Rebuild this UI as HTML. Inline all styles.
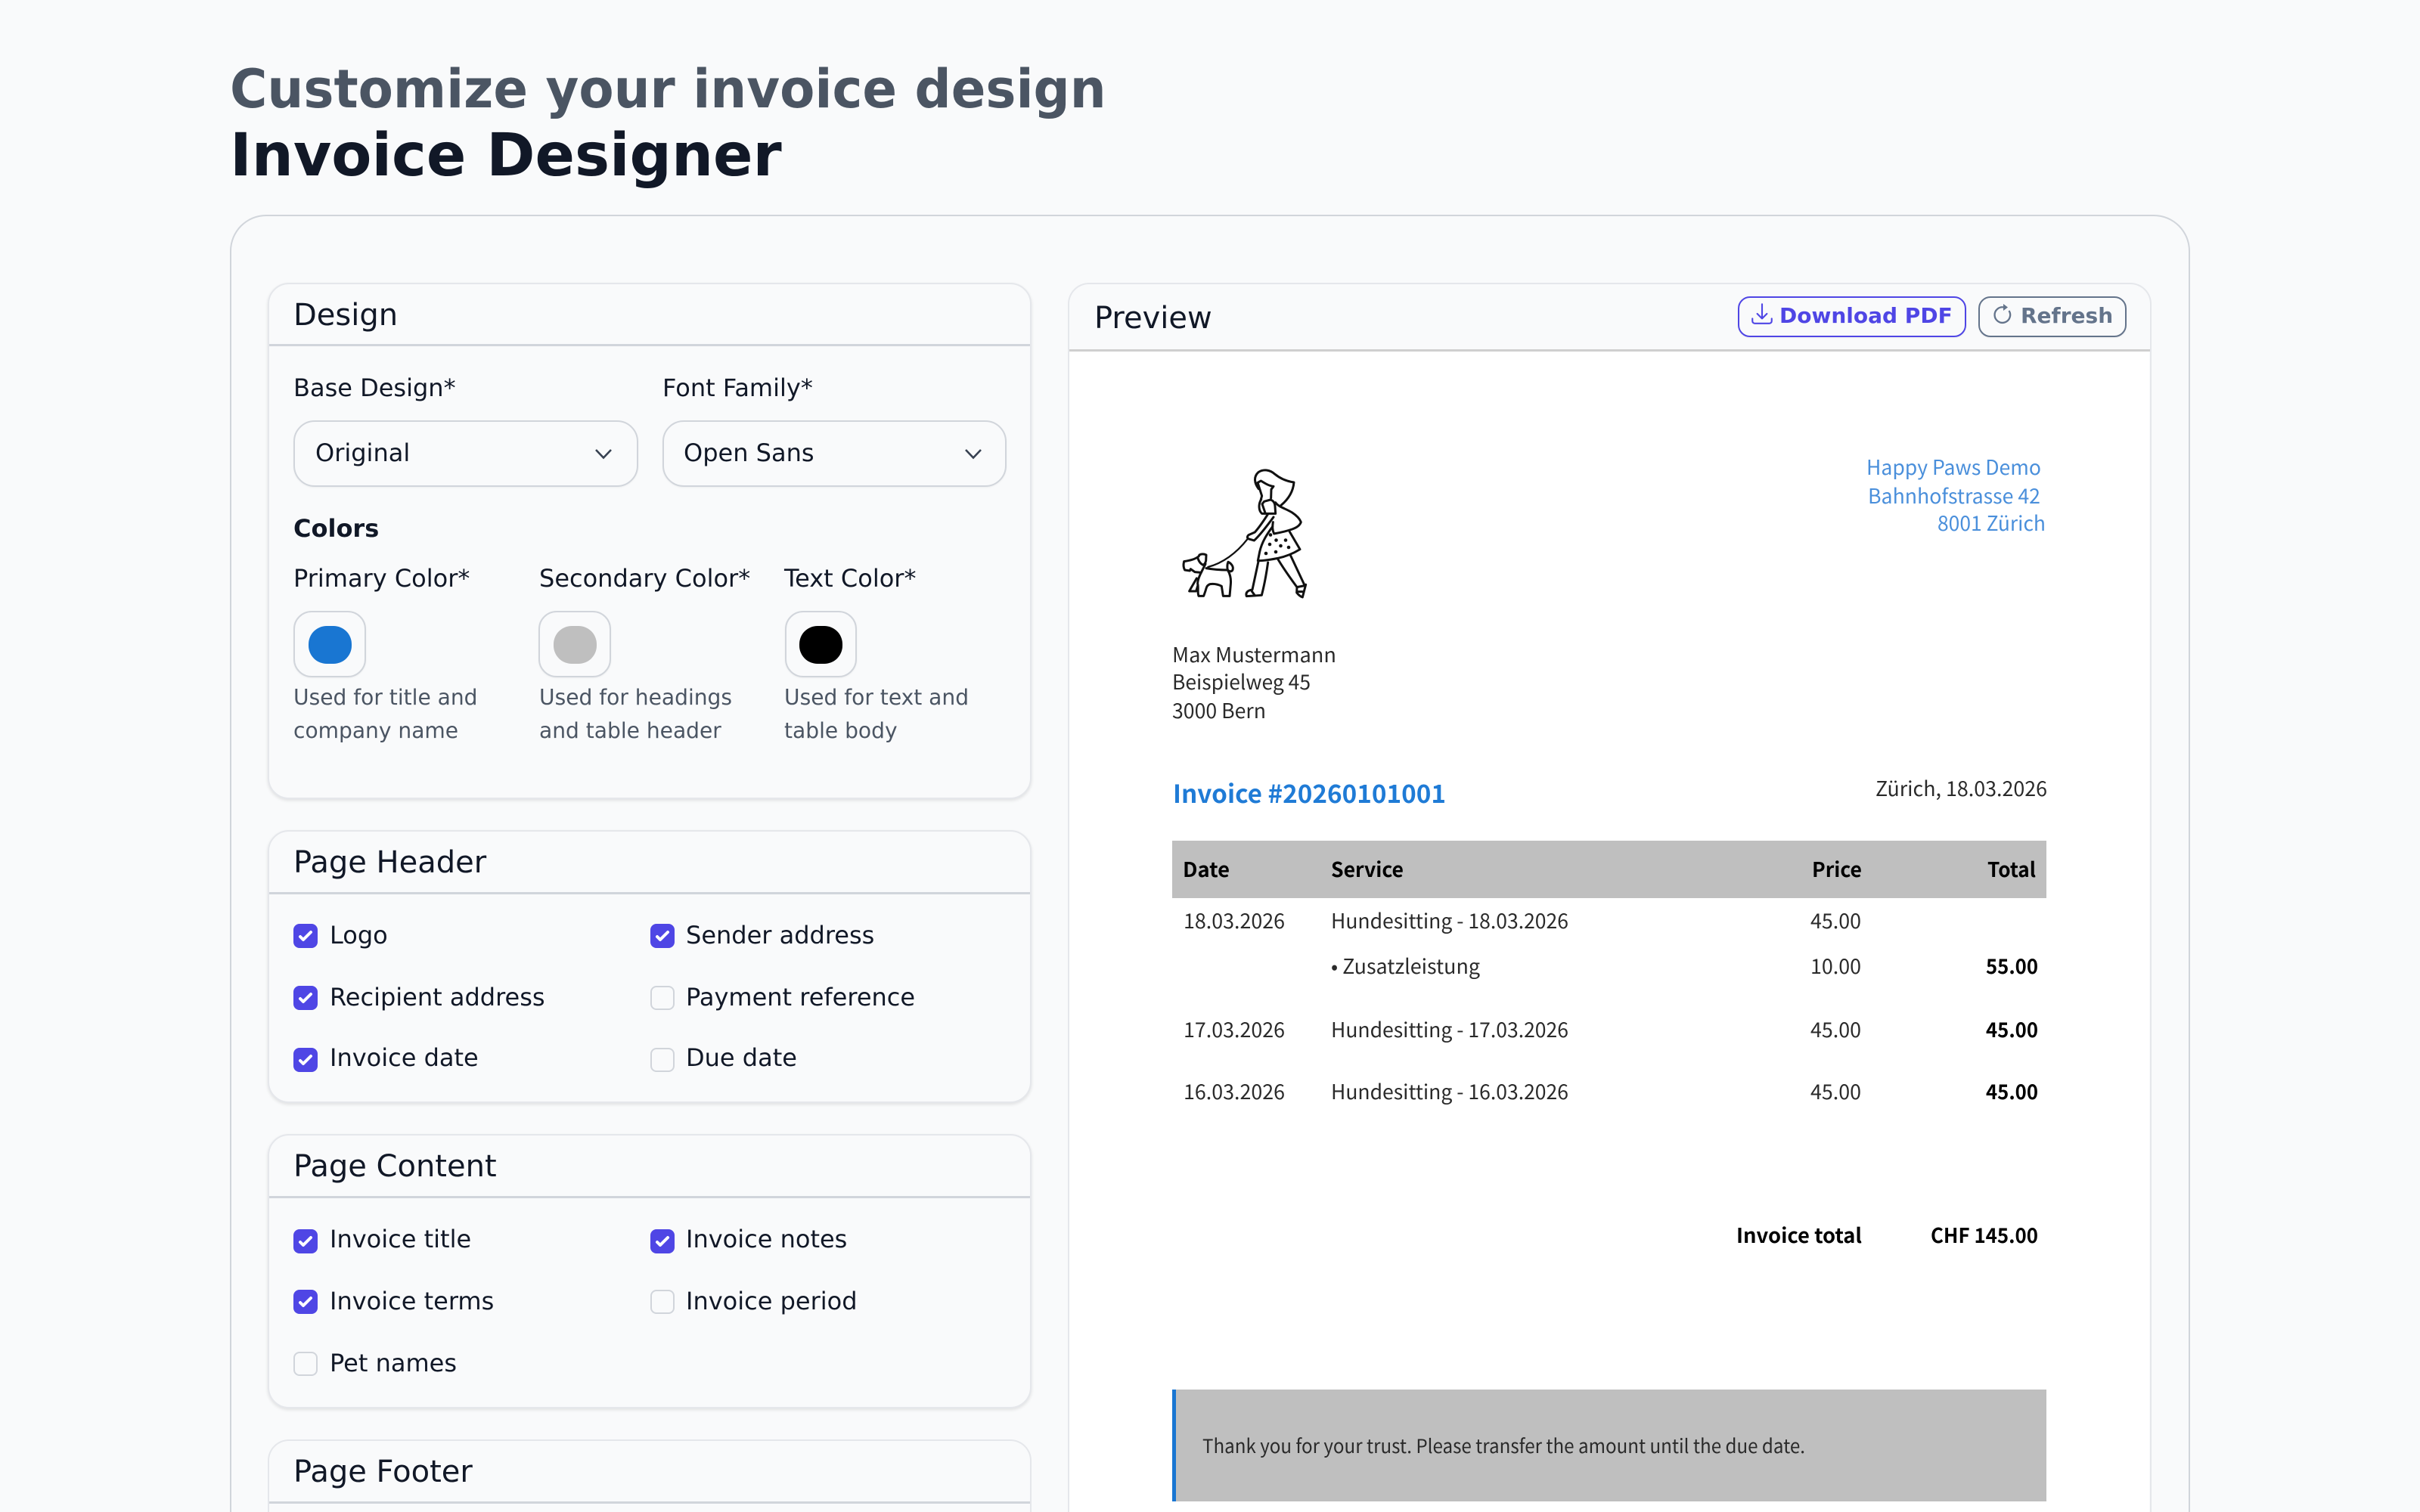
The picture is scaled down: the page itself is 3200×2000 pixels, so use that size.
<!DOCTYPE html>
<html lang="en"><head><meta charset="utf-8"><title>Invoice Designer</title>
<style>
html,body{margin:0;padding:0;width:3200px;height:2000px;overflow:hidden;background:#f9fafb}
body{position:relative;font-family:"DejaVu Sans",sans-serif;color:#111827}
.t{position:absolute;white-space:nowrap}
.l{font-size:32px;line-height:40px}
.h{font-size:40px;line-height:48px}
.s{font-size:28.1px;line-height:44px;color:#4b5563}
.card{position:absolute;left:354px;width:1010px;box-sizing:border-box;border:2px solid #e5e7eb;border-radius:28px;box-shadow:0 2px 4px rgba(0,0,0,.1);background:#f9fafb}
.line{position:absolute;height:3px;background:#d1d5db}
.sel{position:absolute;top:556px;width:456px;height:88px;box-sizing:border-box;border:2px solid #d1d5db;border-radius:28px;box-shadow:0 1px 2px rgba(0,0,0,.05)}
.sw{position:absolute;top:808px;width:96px;height:88px;box-sizing:border-box;border:2px solid #d1d5db;border-radius:24px;box-shadow:0 1px 2px rgba(0,0,0,.05)}
.dot{position:absolute;top:828px;height:50px;width:57px;border-radius:24px}
.cb{position:absolute;width:32px;height:32px;box-sizing:border-box;border-radius:8px}
.on{background:#4f46e5}
.off{border:2px solid #d1d5db}
.cb svg{display:block;width:32px;height:32px}
.btn{position:absolute;top:392px;height:54px;box-sizing:border-box;border-radius:16px;border:2px solid;font-size:28px;font-weight:700;line-height:50px;box-shadow:0 1px 2px rgba(0,0,0,.05)}
svg.abs{position:absolute;overflow:visible}
</style></head><body>

<div class="t" style="left:304px;top:70px;font-size:70px;line-height:96px;font-weight:700;color:#4b5563;transform-origin:0 0;transform:scaleX(.962)">Customize your invoice design</div>
<div class="t" style="left:304px;top:156px;font-size:78px;line-height:100px;font-weight:700;color:#111827;transform-origin:0 0;transform:scaleX(.992)">Invoice Designer</div>

<div style="position:absolute;left:304px;top:284px;width:2592px;height:1716px;box-sizing:border-box;border:2px solid #d1d5db;border-bottom:0;border-radius:48px 48px 0 0"></div>

<!-- Design -->
<div class="card" style="top:374px;height:683px"></div>
<div class="line" style="left:356px;top:455px;width:1006px"></div>
<div class="t h" style="left:388px;top:393px">Design</div>
<div class="t l" style="left:388px;top:493px">Base Design*</div>
<div class="t l" style="left:876px;top:493px">Font Family*</div>
<div class="sel" style="left:388px"></div>
<div class="sel" style="left:876px;width:455px"></div>
<div class="t l" style="left:417px;top:579px">Original</div>
<div class="t l" style="left:904px;top:579px">Open Sans</div>
<svg class="abs" style="left:0;top:0" width="10" height="10"><path d="M788 595l10 10.500 10-10.500M1277 595l10 10.500 10-10.500" fill="none" stroke="#374151" stroke-width="2.600"/></svg>
<div class="t l" style="left:388px;top:679px;font-weight:700">Colors</div>
<div class="t l" style="left:388px;top:745px">Primary Color*</div>
<div class="t l" style="left:713px;top:745px">Secondary Color*</div>
<div class="t l" style="left:1037px;top:745px">Text Color*</div>
<div class="sw" style="left:388px"></div><div class="dot" style="left:408px;background:#1976d2"></div>
<div class="sw" style="left:712px"></div><div class="dot" style="left:732px;background:#bfbfbf"></div>
<div class="sw" style="left:1038px;width:95px"></div><div class="dot" style="left:1057px;background:#000"></div>
<div class="t s" style="left:388px;top:901px">Used for title and<br>company name</div>
<div class="t s" style="left:713px;top:901px">Used for headings<br>and table header</div>
<div class="t s" style="left:1037px;top:901px">Used for text and<br>table body</div>

<!-- Page Header -->
<div class="card" style="top:1098px;height:361px"></div>
<div class="line" style="left:356px;top:1180px;width:1006px"></div>
<div class="t h" style="left:388px;top:1117px">Page Header</div>
<div class="cb on" style="left:388px;top:1222px"><svg viewBox="0 0 16 16"><path fill="#fff" d="M12.207 4.793a1 1 0 010 1.414l-5 5a1 1 0 01-1.414 0l-2-2a1 1 0 011.414-1.414L6.500 9.086l4.293-4.293a1 1 0 011.414 0z"/></svg></div>
<div class="t l" style="left:436px;top:1217px">Logo</div>
<div class="cb on" style="left:860px;top:1222px"><svg viewBox="0 0 16 16"><path fill="#fff" d="M12.207 4.793a1 1 0 010 1.414l-5 5a1 1 0 01-1.414 0l-2-2a1 1 0 011.414-1.414L6.500 9.086l4.293-4.293a1 1 0 011.414 0z"/></svg></div>
<div class="t l" style="left:907px;top:1217px">Sender address</div>
<div class="cb on" style="left:388px;top:1304px"><svg viewBox="0 0 16 16"><path fill="#fff" d="M12.207 4.793a1 1 0 010 1.414l-5 5a1 1 0 01-1.414 0l-2-2a1 1 0 011.414-1.414L6.500 9.086l4.293-4.293a1 1 0 011.414 0z"/></svg></div>
<div class="t l" style="left:436px;top:1299px">Recipient address</div>
<div class="cb off" style="left:860px;top:1304px"></div>
<div class="t l" style="left:907px;top:1299px">Payment reference</div>
<div class="cb on" style="left:388px;top:1386px"><svg viewBox="0 0 16 16"><path fill="#fff" d="M12.207 4.793a1 1 0 010 1.414l-5 5a1 1 0 01-1.414 0l-2-2a1 1 0 011.414-1.414L6.500 9.086l4.293-4.293a1 1 0 011.414 0z"/></svg></div>
<div class="t l" style="left:436px;top:1379px">Invoice date</div>
<div class="cb off" style="left:860px;top:1386px"></div>
<div class="t l" style="left:907px;top:1379px">Due date</div>

<!-- Page Content -->
<div class="card" style="top:1500px;height:363px"></div>
<div class="line" style="left:356px;top:1582px;width:1006px"></div>
<div class="t h" style="left:388px;top:1519px">Page Content</div>
<div class="cb on" style="left:388px;top:1626px"><svg viewBox="0 0 16 16"><path fill="#fff" d="M12.207 4.793a1 1 0 010 1.414l-5 5a1 1 0 01-1.414 0l-2-2a1 1 0 011.414-1.414L6.500 9.086l4.293-4.293a1 1 0 011.414 0z"/></svg></div>
<div class="t l" style="left:436px;top:1619px">Invoice title</div>
<div class="cb on" style="left:860px;top:1626px"><svg viewBox="0 0 16 16"><path fill="#fff" d="M12.207 4.793a1 1 0 010 1.414l-5 5a1 1 0 01-1.414 0l-2-2a1 1 0 011.414-1.414L6.500 9.086l4.293-4.293a1 1 0 011.414 0z"/></svg></div>
<div class="t l" style="left:907px;top:1619px">Invoice notes</div>
<div class="cb on" style="left:388px;top:1706px"><svg viewBox="0 0 16 16"><path fill="#fff" d="M12.207 4.793a1 1 0 010 1.414l-5 5a1 1 0 01-1.414 0l-2-2a1 1 0 011.414-1.414L6.500 9.086l4.293-4.293a1 1 0 011.414 0z"/></svg></div>
<div class="t l" style="left:436px;top:1701px">Invoice terms</div>
<div class="cb off" style="left:860px;top:1706px"></div>
<div class="t l" style="left:907px;top:1701px">Invoice period</div>
<div class="cb off" style="left:388px;top:1788px"></div>
<div class="t l" style="left:436px;top:1783px">Pet names</div>

<!-- Page Footer -->
<div class="card" style="top:1904px;height:96px;border-bottom:0;border-radius:28px 28px 0 0;box-shadow:none"></div>
<div class="line" style="left:356px;top:1986px;width:1006px"></div>
<div class="t h" style="left:388px;top:1923px">Page Footer</div>

<!-- Preview -->
<div style="position:absolute;left:1412px;top:374px;width:1433px;height:1626px;box-sizing:border-box;border:2px solid #e5e7eb;border-bottom:0;border-radius:28px 28px 0 0;background:#f9fafb"></div>
<div style="position:absolute;left:1414px;top:465px;width:1428px;height:1535px;background:#fff"></div>
<div class="line" style="left:1414px;top:462px;width:1429px;background:#cfcfcf"></div>
<div class="t h" style="left:1447px;top:397px">Preview</div>

<div class="btn" style="left:2298px;width:302px;border-color:#4f46e5;color:#4f46e5"><span class="t" style="left:53px;top:-1px">Download PDF</span></div>
<svg class="abs" style="left:2313px;top:398px" width="34" height="34" viewBox="0 0 24 24" fill="none" stroke="#4f46e5" stroke-width="1.500" stroke-linecap="round" stroke-linejoin="round"><path d="M3 16.500v2.250A2.250 2.250 0 005.250 21h13.500A2.250 2.250 0 0021 18.750V16.500M16.500 12L12 16.500m0 0L7.500 12m4.500 4.500V3"/></svg>
<div class="btn" style="left:2616px;width:196px;border-color:#64748b;color:#64748b"><span class="t" style="left:54px;top:-1px">Refresh</span></div>
<svg class="abs" style="left:0;top:0" width="10" height="10"><path d="M2650 406.500A10.300 10.300 0 1 0 2656.500 411" fill="none" stroke="#64748b" stroke-width="2.300"/><path d="M2649 402l6 4.500-6 4.500z" fill="#64748b"/></svg>

<!-- Invoice -->
<svg class="abs" style="left:0;top:0" width="3200" height="2000" viewBox="0 0 3200 2000" font-family="'Noto Sans CJK JP','Liberation Sans',sans-serif" font-size="27" fill="#2a2a2a">
<g transform="translate(1520 600) scale(.3333)" fill="none" stroke="#111" stroke-width="9" stroke-linejoin="round" stroke-linecap="round">
<path d="M433 140C416 118 412 92 432 74C452 60 478 64 498 82C520 100 545 110 573 114C570 150 552 180 522 205"/>
<path d="M428 116L442 108C458 118 474 128 492 130L483 142L482 176"/>
<path d="M430 118L446 168L442 182"/>
<path d="M443 182C432 200 432 226 446 238L460 238L447 200L455 190L480 183C492 187 497 195 498 208L500 238L460 238"/>
<path d="M500 194C512 212 540 218 566 234C584 246 596 258 601 272C596 286 584 294 566 300C544 308 516 314 494 318C486 300 488 288 490 272"/>
<path d="M470 240C456 262 438 290 418 312L395 322C388 326 386 334 392 338L415 345C436 326 464 290 492 252"/>
<path d="M488 290C466 320 446 350 437 390L430 425C456 426 484 420 510 415C544 408 574 394 597 380L556 310"/>
<path d="M470 432C464 475 456 520 445 562L385 566C380 552 390 542 408 540L432 428"/>
<path d="M405 545L418 563"/>
<path d="M510 420C532 456 560 496 585 530L616 524L560 405"/>
<path d="M585 530L584 552C592 562 600 568 607 570L620 520"/>
<path d="M585 548L607 548"/>
<path d="M388 340C345 395 290 435 232 450" stroke-width="7"/>
<path d="M195 408C180 420 160 424 137 428C134 440 134 452 140 462L160 465L163 458L180 470L205 472L222 438"/>
<path d="M195 408L198 402C206 398 216 398 225 402L224 425C222 434 218 440 212 442C204 438 196 428 192 416"/>
<path d="M225 455C252 460 282 462 310 462C320 478 324 500 322 520L318 565L292 565L286 526C270 518 254 516 240 518C228 522 226 530 222 545L215 565L195 565C190 552 194 538 192 522C188 510 196 490 205 472"/>
<path d="M310 462C318 470 330 470 331 456C332 446 322 434 312 430C308 440 308 452 310 462Z"/>
<path d="M187 495C176 515 166 530 158 546L185 546L192 522"/>
</g>
<g fill="#111"><circle cx="1680" cy="707.500" r="2.300"/><circle cx="1687.500" cy="714.500" r="2.300"/><circle cx="1700" cy="714.500" r="2.300"/><circle cx="1679" cy="720" r="2.300"/><circle cx="1693.500" cy="722" r="2.300"/><circle cx="1704" cy="724" r="2.300"/><circle cx="1674" cy="732" r="2.300"/><circle cx="1687" cy="730" r="2.300"/></g>

<g fill="#4a8fdb">
<text x="2468" y="628" textLength="231" lengthAdjust="spacingAndGlyphs">Happy Paws Demo</text>
<text x="2470" y="666" textLength="228" lengthAdjust="spacingAndGlyphs">Bahnhofstrasse 42</text>
<text x="2562" y="702" textLength="143" lengthAdjust="spacingAndGlyphs">8001 Zürich</text>
</g>
<text x="1550" y="876" textLength="217" lengthAdjust="spacingAndGlyphs">Max Mustermann</text>
<text x="1550" y="912" textLength="183" lengthAdjust="spacingAndGlyphs">Beispielweg 45</text>
<text x="1550" y="950" textLength="124" lengthAdjust="spacingAndGlyphs">3000 Bern</text>
<text x="1551" y="1062" font-size="33" font-weight="700" fill="#1f7bd6" textLength="361" lengthAdjust="spacingAndGlyphs">Invoice #20260101001</text>
<text x="2480" y="1053" textLength="227" lengthAdjust="spacingAndGlyphs">Zürich, 18.03.2026</text>

<rect x="1550" y="1112" width="1156" height="76" fill="#bfbfbf"/>
<g font-weight="700" fill="#000">
<text x="1564" y="1160" textLength="62" lengthAdjust="spacingAndGlyphs">Date</text>
<text x="1760" y="1160" textLength="96" lengthAdjust="spacingAndGlyphs">Service</text>
<text x="2396" y="1160" textLength="66" lengthAdjust="spacingAndGlyphs">Price</text>
<text x="2628" y="1160" textLength="64" lengthAdjust="spacingAndGlyphs">Total</text>
</g>
<text x="1565" y="1228" textLength="134" lengthAdjust="spacingAndGlyphs">18.03.2026</text>
<text x="1760" y="1228" textLength="314" lengthAdjust="spacingAndGlyphs">Hundesitting - 18.03.2026</text>
<text x="2394" y="1228" textLength="67" lengthAdjust="spacingAndGlyphs">45.00</text>
<text x="1760" y="1288" textLength="197" lengthAdjust="spacingAndGlyphs">• Zusatzleistung</text>
<text x="2394" y="1288" textLength="67" lengthAdjust="spacingAndGlyphs">10.00</text>
<text x="2626" y="1288" font-weight="700" fill="#000" textLength="69" lengthAdjust="spacingAndGlyphs">55.00</text>
<text x="1565" y="1372" textLength="134" lengthAdjust="spacingAndGlyphs">17.03.2026</text>
<text x="1760" y="1372" textLength="314" lengthAdjust="spacingAndGlyphs">Hundesitting - 17.03.2026</text>
<text x="2394" y="1372" textLength="67" lengthAdjust="spacingAndGlyphs">45.00</text>
<text x="2626" y="1372" font-weight="700" fill="#000" textLength="69" lengthAdjust="spacingAndGlyphs">45.00</text>
<text x="1565" y="1454" textLength="134" lengthAdjust="spacingAndGlyphs">16.03.2026</text>
<text x="1760" y="1454" textLength="314" lengthAdjust="spacingAndGlyphs">Hundesitting - 16.03.2026</text>
<text x="2394" y="1454" textLength="67" lengthAdjust="spacingAndGlyphs">45.00</text>
<text x="2626" y="1454" font-weight="700" fill="#000" textLength="69" lengthAdjust="spacingAndGlyphs">45.00</text>

<text x="2296" y="1644" font-weight="700" fill="#000" textLength="166" lengthAdjust="spacingAndGlyphs">Invoice total</text>
<text x="2553" y="1644" font-weight="700" fill="#000" textLength="142" lengthAdjust="spacingAndGlyphs">CHF 145.00</text>

<rect x="1550" y="1838" width="1156" height="148" fill="#bfbfbf"/>
<rect x="1550" y="1838" width="5" height="148" fill="#1976d2"/>
<text x="1590" y="1922" font-size="25.500" textLength="797" lengthAdjust="spacingAndGlyphs">Thank you for your trust. Please transfer the amount until the due date.</text>
</svg>
</body></html>
